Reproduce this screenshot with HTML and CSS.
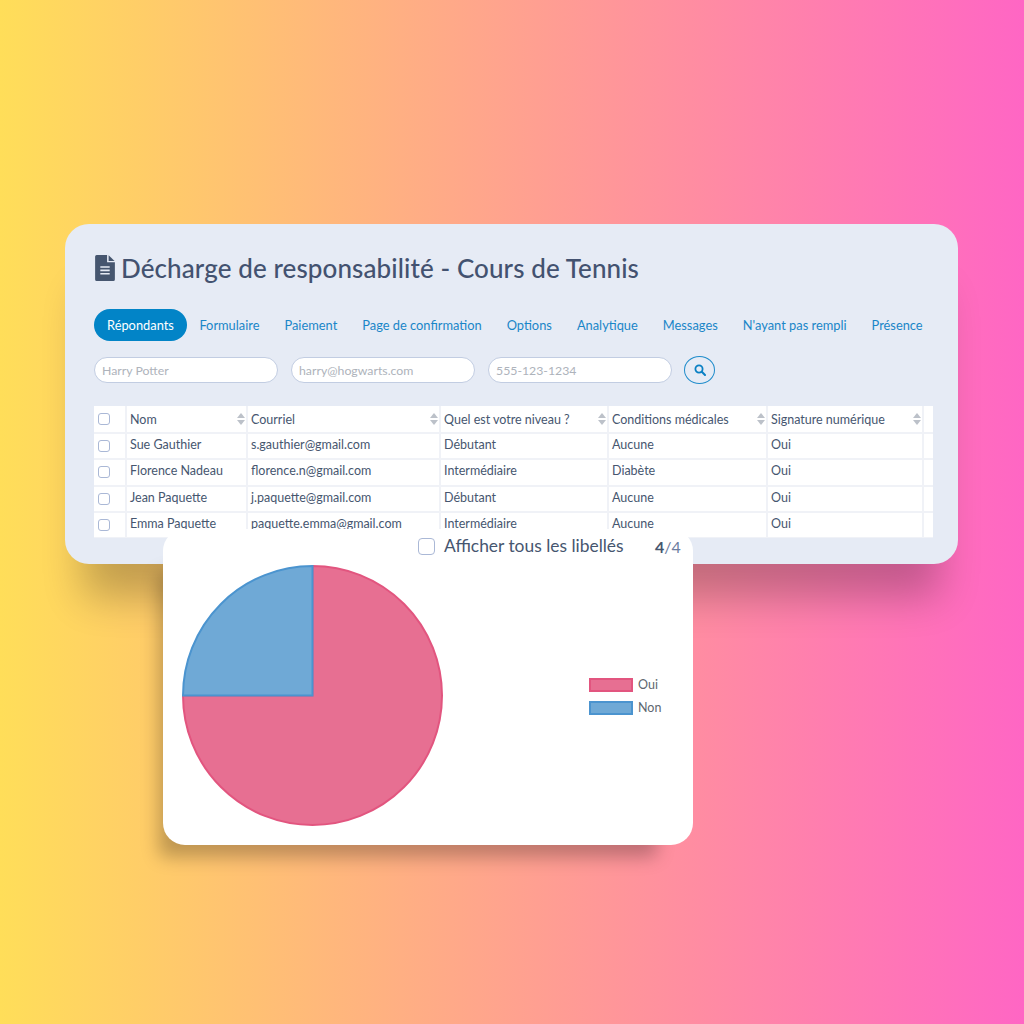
FILE: index.html
```html
<!DOCTYPE html>
<html lang="fr">
<head>
<meta charset="utf-8">
<title>Décharge de responsabilité</title>
<link rel="stylesheet" href="styles.css">
</head>
<body>
<main class="stage">
  <section class="panel">
    <h1 class="title">
      <svg class="doc" viewBox="0 0 19 25" aria-hidden="true"><path d="M1.5 0H11.5V7H19V23.5A1.5 1.5 0 0 1 17.500 25H1.500A1.500 1.500 0 0 1 0 23.500V1.500A1.500 1.500 0 0 1 1.500 0Z" fill="#46566f"/><path d="M13 0.300L18.700 5.700H13Z" fill="#46566f"/><path d="M5 11.500H14M5 14.800H14M5 18.100H14" stroke="#e6ebf5" stroke-width="1.500"/></svg>
      <span>Décharge de responsabilité - Cours de Tennis</span>
    </h1>
    <nav class="tabs">
      <a class="tab active">Répondants</a>
      <a class="tab">Formulaire</a>
      <a class="tab">Paiement</a>
      <a class="tab">Page de confirmation</a>
      <a class="tab">Options</a>
      <a class="tab">Analytique</a>
      <a class="tab">Messages</a>
      <a class="tab">N'ayant pas rempli</a>
      <a class="tab">Présence</a>
    </nav>
    <div class="filters">
      <input class="field" placeholder="Harry Potter">
      <input class="field" placeholder="harry@hogwarts.com">
      <input class="field" placeholder="555-123-1234">
      <button class="search" aria-label="Rechercher">
        <svg viewBox="0 0 12 12" width="12" height="12"><circle cx="5" cy="5" r="3.600" fill="none" stroke="#0a80c4" stroke-width="1.800"/><path d="M7.800 7.800L11 11" stroke="#0a80c4" stroke-width="2" stroke-linecap="round"/></svg>
      </button>
    </div>
    <div class="table-wrap">
      <table class="grid">
        <colgroup>
          <col class="c0"><col class="c1"><col class="c2"><col class="c3"><col class="c4"><col class="c5"><col class="c6">
        </colgroup>
        <thead>
          <tr>
            <th><i class="check"></i></th>
            <th><div class="head">Nom<b class="sort"></b></div></th>
            <th><div class="head">Courriel<b class="sort"></b></div></th>
            <th><div class="head">Quel est votre niveau ?<b class="sort"></b></div></th>
            <th><div class="head">Conditions médicales<b class="sort"></b></div></th>
            <th><div class="head">Signature numérique<b class="sort"></b></div></th>
            <th></th>
          </tr>
        </thead>
        <tbody>
          <tr><td><i class="check"></i></td><td>Sue Gauthier</td><td>s.gauthier@gmail.com</td><td>Débutant</td><td>Aucune</td><td>Oui</td><td></td></tr>
          <tr><td><i class="check"></i></td><td>Florence Nadeau</td><td>florence.n@gmail.com</td><td>Intermédiaire</td><td>Diabète</td><td>Oui</td><td></td></tr>
          <tr><td><i class="check"></i></td><td>Jean Paquette</td><td>j.paquette@gmail.com</td><td>Débutant</td><td>Aucune</td><td>Oui</td><td></td></tr>
          <tr><td><i class="check"></i></td><td>Emma Paquette</td><td>paquette.emma@gmail.com</td><td>Intermédiaire</td><td>Aucune</td><td>Oui</td><td></td></tr>
        </tbody>
      </table>
    </div>
  </section>
  <section class="chart-card">
    <div class="chart-top">
      <i class="check big"></i>
      <span class="show-all">Afficher tous les libellés</span>
      <span class="count"><strong>4</strong>/4</span>
    </div>
    <div class="chart-body">
      <svg class="pie" viewBox="0 0 264 264" aria-hidden="true">
        <path d="M131.500 131.500V2A129.500 129.500 0 1 1 2 131.500Z" fill="#e76f92" stroke="#e2557f" stroke-width="2"/>
        <path d="M131.500 131.500H2A129.500 129.500 0 0 1 131.500 2Z" fill="#6fa9d6" stroke="#4b94cf" stroke-width="2"/>
      </svg>
      <ul class="legend">
        <li class="legend-item"><i class="swatch pink"></i>Oui</li>
        <li class="legend-item"><i class="swatch blue"></i>Non</li>
      </ul>
    </div>
  </section>
</main>
</body>
</html>
```
FILE: styles.css
```css
* { box-sizing: border-box; }
html, body { margin: 0; height: 100%; }
body {
  background: linear-gradient(90deg, #ffde59 0%, #ff66c4 100%);
  font-family: "Lato", "Noto Sans", sans-serif;
  color: #46566f;
}
.stage { position: relative; width: 1024px; height: 1024px; padding: 224px 66px 0 65px; }
.panel {
  height: 340px;
  padding: 26px 25px 0 29px;
  background: #e6ebf5;
  border-radius: 24px;
  box-shadow: 0 51px 40px -18px rgba(0, 0, 0, .24);
}
.title { display: flex; align-items: center; gap: 6px; margin: 0; height: 36px; font-size: 26px; font-weight: 500; letter-spacing: .1px; color: #435270; white-space: nowrap; }
.doc { width: 20px; height: 26px; flex: none; margin-left: 1px; }
.tabs { display: flex; margin-top: 23px; height: 32px; align-items: center; font-size: 12.850px; color: #1a86c8; white-space: nowrap; }
.tab { padding: 0 12.500px; line-height: 32px; }
.tab.active { background: #0284c7; color: #fff; border-radius: 16px; padding: 0 13px; }
.filters { display: flex; align-items: center; gap: 13px; margin-top: 15px; height: 28px; }
.field {
  width: 184px; height: 26px; padding: 0 7px;
  border: 1px solid #c2cde2; border-radius: 13px; background: #fff;
  font: 12.300px "Lato", sans-serif; outline: none;
}
.field::placeholder { color: #aeb3bb; opacity: 1; }
.search {
  display: flex; align-items: center; justify-content: center;
  width: 31px; height: 28px; padding: 0; margin-left: -1px;
  border: 1px solid #1f8ccb; border-radius: 50%; background: transparent;
}
.table-wrap { margin-top: 22px; width: 839px; height: 132px; overflow: hidden; background: #fff; }
.grid { width: 839px; table-layout: fixed; border-collapse: collapse; font-size: 12.500px; color: #46566f; }
.c0 { width: 32px; } .c1 { width: 121px; } .c2 { width: 193px; } .c3 { width: 168px; } .c4 { width: 159px; } .c5 { width: 156px; } .c6 { width: 10px; }
.grid th, .grid td { padding: 0 1px 0 3px; border-left: 2px solid #f0f2f7; border-bottom: 2px solid #f0f2f7; text-align: left; font-weight: 400; white-space: nowrap; overflow: hidden; }
.grid td { padding-bottom: 3px; }
.grid th:first-child, .grid td:first-child { border-left: 0; padding: 0 0 0 4px; }
.grid th { height: 27px; }
.grid td { height: 26.300px; }
.head { display: flex; align-items: center; justify-content: space-between; }
.sort { position: relative; flex: none; width: 8px; height: 12px; }
.sort::before, .sort::after { content: ""; position: absolute; left: 0; border-left: 4px solid transparent; border-right: 4px solid transparent; }
.sort::before { top: 0; border-bottom: 5px solid #bcc1c9; }
.sort::after { bottom: 0; border-top: 5px solid #bcc1c9; }
.check { display: block; width: 12px; height: 12px; border: 1px solid #aab8d6; border-radius: 3px; background: #fff; }
.check.big { width: 17px; height: 17px; border-width: 1.500px; border-radius: 4px; }
.chart-card {
  position: absolute; left: 163px; top: 529px;
  width: 530px; height: 316px;
  background: #fff;
  border-radius: 22px;
  box-shadow: -20px 28px 18px -16px rgba(0, 0, 0, .26);
}
.chart-top { display: flex; align-items: center; height: 34px; padding-left: 255px; font-size: 17.400px; color: #46566f; }
.show-all { margin: -1px 0 0 9px; width: 211px; white-space: nowrap; }
.count { color: #6c7da0; font-size: 16px; }
.count strong { color: #46566f; font-weight: 700; }
.chart-body { position: relative; height: 282px; }
.pie { position: absolute; left: 18px; top: 1px; width: 264px; height: 264px; }
.legend { position: absolute; left: 426px; top: 110px; margin: 0; padding: 0; list-style: none; font-size: 12.500px; color: #606770; }
.legend-item { display: flex; align-items: center; gap: 5px; height: 23px; }
.swatch { display: block; width: 44px; height: 14px; border: 2px solid; }
.swatch.pink { background: #e76f92; border-color: #e2557f; }
.swatch.blue { background: #6fa9d6; border-color: #4b94cf; }
```
